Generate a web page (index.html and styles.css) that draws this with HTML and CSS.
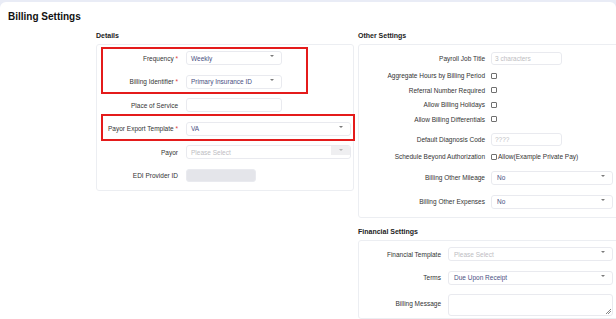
FILE: index.html
```html
<!DOCTYPE html>
<html lang="en">
<head>
  <meta charset="UTF-8" />
  <meta name="viewport" content="width=device-width, initial-scale=1.0"/>
  <title>Billing Settings</title>
  <link rel="stylesheet" href="styles.css">
</head>
<body>

  <div class="page">
    <h1 class="title">Billing Settings</h1>

    <div class="columns">
      <div class="col col-left">
        <h2 class="section-title">Details</h2>
        <div class="card details">
          <div class="row">
            <label>Frequency <span class="req">*</span></label>
            <div class="select w-96"><span class="value">Weekly</span></div>
          </div>
          <div class="row">
            <label>Billing Identifier <span class="req">*</span></label>
            <div class="select w-96"><span class="value">Primary Insurance ID</span></div>
          </div>
          <div class="row">
            <label>Place of Service</label>
            <div class="input w-96"></div>
          </div>
          <div class="row">
            <label>Payor Export Template <span class="req">*</span></label>
            <div class="select w-165"><span class="value">VA</span></div>
          </div>
          <div class="row">
            <label>Payor</label>
            <div class="select disabled w-165"><span class="placeholder">Please Select</span></div>
          </div>
          <div class="row">
            <label>EDI Provider ID</label>
            <div class="input readonly w-70"></div>
          </div>

          <!-- review marks -->
          <div class="mark mark-1"></div>
          <div class="mark mark-2"></div>
        </div>
      </div>

      <div class="col col-right">
        <h2 class="section-title">Other Settings</h2>
        <div class="card other">
          <div class="row">
            <label>Payroll Job Title</label>
            <div class="input short w-71"><span class="placeholder">3 characters</span></div>
          </div>
          <div class="row check-row">
            <label>Aggregate Hours by Billing Period</label>
            <span class="checkbox"></span>
          </div>
          <div class="row check-row">
            <label>Referral Number Required</label>
            <span class="checkbox"></span>
          </div>
          <div class="row check-row">
            <label>Allow Billing Holidays</label>
            <span class="checkbox"></span>
          </div>
          <div class="row check-row">
            <label>Allow Billing Differentials</label>
            <span class="checkbox"></span>
          </div>
          <div class="row">
            <label>Default Diagnosis Code</label>
            <div class="input short w-71"><span class="placeholder">????</span></div>
          </div>
          <div class="row check-row">
            <label>Schedule Beyond Authorization</label>
            <span class="checkbox"></span>
            <span class="check-text">Allow(Example Private Pay)</span>
          </div>
          <div class="row">
            <label>Billing Other Mileage</label>
            <div class="select w-122"><span class="value">No</span></div>
          </div>
          <div class="row">
            <label>Billing Other Expenses</label>
            <div class="select w-122"><span class="value">No</span></div>
          </div>
        </div>

        <h2 class="section-title financial-title">Financial Settings</h2>
        <div class="card financial">
          <div class="row">
            <label>Financial Template</label>
            <div class="select w-165"><span class="placeholder">Please Select</span></div>
          </div>
          <div class="row">
            <label>Terms</label>
            <div class="select w-165"><span class="value">Due Upon Receipt</span></div>
          </div>
          <div class="row row-top">
            <label>Billing Message</label>
            <div class="textarea w-165"><span class="grip"></span></div>
          </div>
        </div>
      </div>
    </div>
  </div>

</body>
</html>
```

FILE: styles.css
```css
* {
  box-sizing: border-box;
}
html, body {
  height: 100%;
}
body {
  margin: 0;
  font-family: "Liberation Sans", Arial, sans-serif;
  background: #e9ecf6;
  color: #333;
  overflow: hidden;
}
.page {
  margin-top: 2px;
  height: calc(100% - 2px);
  background: #fff;
  border-radius: 6px 6px 0 0;
  padding: 9px 0 0 8px;
  overflow: hidden;
}
.title {
  margin: 0;
  font-size: 10px;
  line-height: 12px;
  font-weight: bold;
  color: #111;
}
.columns {
  display: flex;
  gap: 4px;
  margin-top: 8px;
  padding-left: 88px;
}
.col-left {
  width: 258px;
  flex-shrink: 0;
}
.col-right {
  width: 262px;
  flex-shrink: 0;
}
.section-title {
  margin: 0 0 4px;
  font-size: 7px;
  line-height: 9px;
  font-weight: bold;
  color: #222;
}
.financial-title {
  margin-top: 9px;
}
.card {
  position: relative;
  border: 1px solid #eceef2;
  border-radius: 3px;
}
.details {
  padding: 6px 0 8.5px;
}
.other {
  padding: 7px 0 8.5px;
}
.financial {
  padding: 6px 0 2px;
}

/* rows */
.row {
  display: flex;
  align-items: center;
  font-size: 6.5px;
  line-height: 9px;
}
.row label {
  flex-shrink: 0;
  text-align: right;
  color: #333;
}
.details .row label {
  width: 81px;
  margin-right: 8px;
}
.other .row label {
  width: 126px;
  margin-right: 6px;
}
.financial .row label {
  width: 82px;
  margin-right: 7px;
}
.details .row + .row {
  margin-top: 9.5px;
}
.other .row + .row {
  margin-top: 10px;
}
.other .row + .check-row {
  margin-top: 6.5px;
}
.financial .row + .row {
  margin-top: 9.5px;
}
.check-row {
  height: 8px;
}
.row-top {
  align-items: flex-start;
}
.row-top label {
  padding-top: 5px;
}
.req {
  color: #e03a3a;
}

/* controls */
.select,
.input,
.textarea {
  position: relative;
  height: 14px;
  border: 1px solid #e9eaef;
  border-radius: 3px;
  background: #fff;
  padding: 0 4px;
  display: flex;
  align-items: center;
  white-space: nowrap;
  overflow: hidden;
}
.other .select,
.financial .select {
  padding-left: 5px;
}
.input.short {
  height: 13px;
  padding-left: 3px;
}
.select::after {
  content: "";
  position: absolute;
  right: 7px;
  top: 3px;
  border-left: 2px solid transparent;
  border-right: 2px solid transparent;
  border-top: 2.5px solid #7a7a7a;
}
.select.disabled::after {
  right: 7px;
  border-top-color: #b5b5b5;
}
.select.disabled::before {
  content: "";
  position: absolute;
  right: 0;
  top: 0;
  width: 19px;
  height: 9px;
  background: #efeff1;
}
.value {
  color: #4a4f82;
}
.placeholder {
  color: #bdbdc2;
}
.input.readonly {
  background: #e4e5ea;
  height: 13px;
}
.textarea {
  height: 22px;
}
.grip {
  position: absolute;
  right: 1px;
  bottom: 1px;
  width: 5px;
  height: 5px;
  background: linear-gradient(135deg, transparent 45%, #888 45%, #888 55%, transparent 55%, transparent 70%, #888 70%, #888 80%, transparent 80%);
}
.checkbox {
  width: 6px;
  height: 6px;
  border: 1px solid #707070;
  border-radius: 1px;
  background: #fff;
}
.check-text {
  margin-left: 1px;
  color: #333;
}

.w-70 { width: 70px; }
.w-71 { width: 71px; }
.w-96 { width: 96px; }
.w-122 { width: 122px; }
.w-165 { width: 165px; }

/* red review marks drawn over the form */
.mark {
  position: absolute;
  border: 2px solid #e41b1b;
  pointer-events: none;
}
.mark-1 {
  left: 4px;
  top: 2px;
  width: 207px;
  height: 47px;
}
.mark-2 {
  left: 4px;
  top: 69px;
  width: 254px;
  height: 27px;
}
```
